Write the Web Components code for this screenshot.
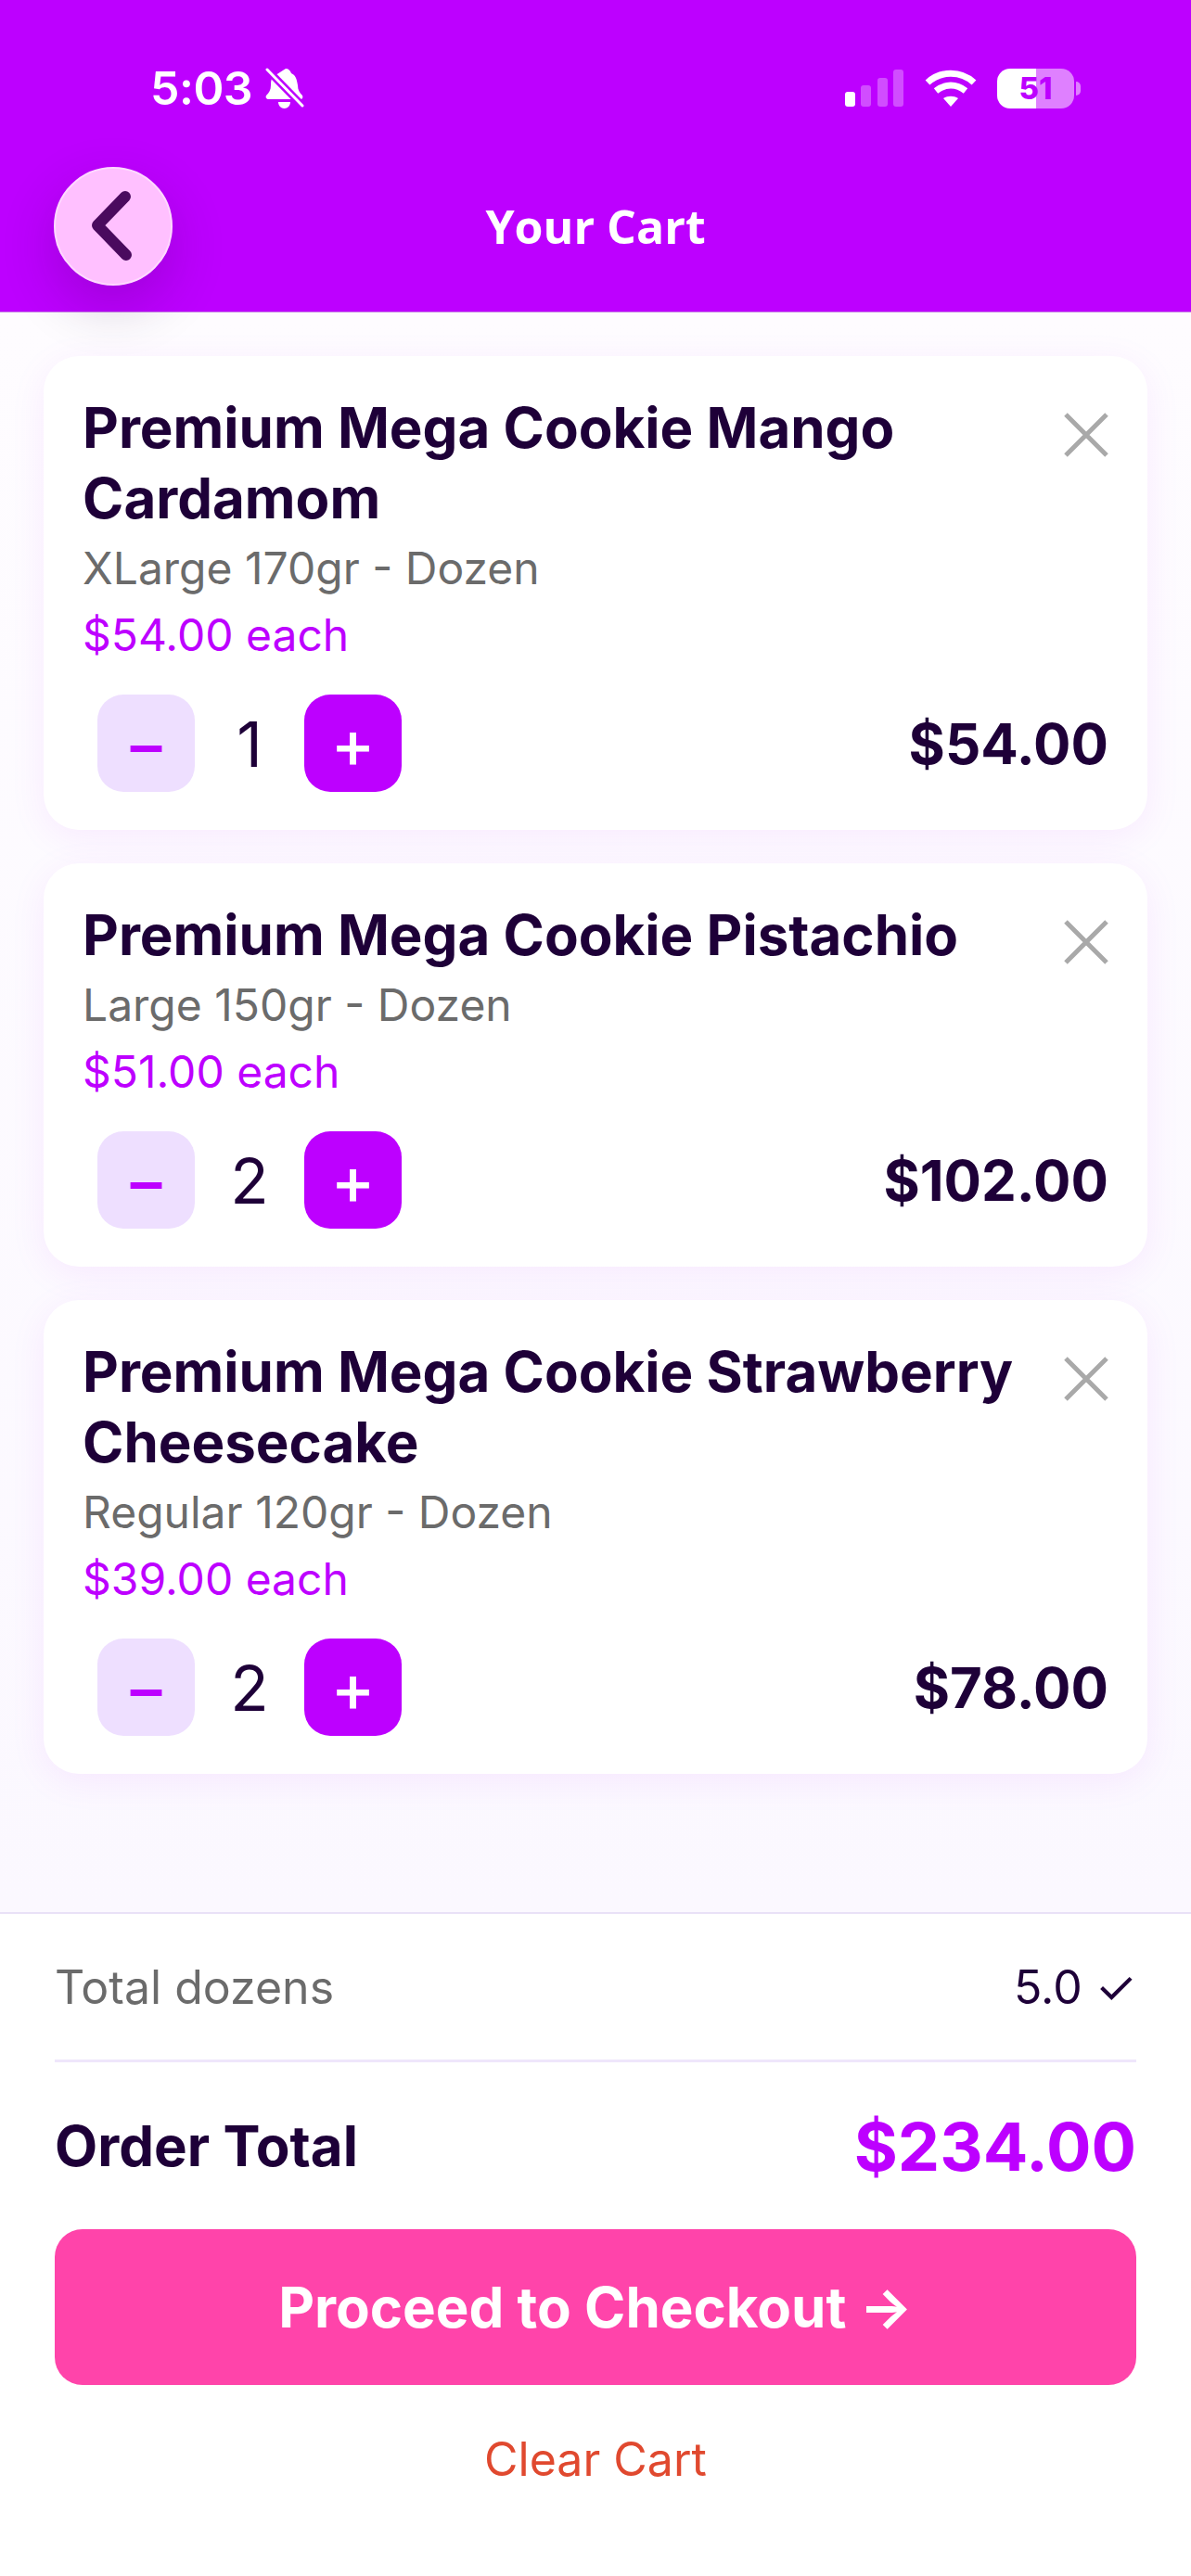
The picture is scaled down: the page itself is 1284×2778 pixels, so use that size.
<!DOCTYPE html>
<html lang="en">
<head>
<meta charset="utf-8">
<title>Your Cart</title>
<style>
    html, body { margin: 0; padding: 0; height: 100%; }
    body { font-family: Inter, "Liberation Sans", sans-serif; color: #1E0038; }
</style>
</head>
<body>
<cart-screen>
    <cart-header slot="header" heading="Your Cart"></cart-header>
    <cart-item name="Premium Mega Cookie Mango Cardamom" variant="XLarge 170gr - Dozen" each="$54.00 each" qty="1" total="$54.00"></cart-item>
    <cart-item name="Premium Mega Cookie Pistachio" variant="Large 150gr - Dozen" each="$51.00 each" qty="2" total="$102.00"></cart-item>
    <cart-item name="Premium Mega Cookie Strawberry Cheesecake" variant="Regular 120gr - Dozen" each="$39.00 each" qty="2" total="$78.00"></cart-item>
    <cart-summary slot="footer"></cart-summary>
</cart-screen>

<script>
class CartScreen extends HTMLElement
{
    constructor()
    {
        super();
        this.attachShadow({mode: 'open'});
    }

    connectedCallback()
    {
        this.shadowRoot.innerHTML =
        `<style>
            :host {
                display: flex;
                flex-direction: column;
                width: 1284px;
                height: 2778px;
                background: #fff;
            }
            main {
                flex: 1;
                display: flex;
                flex-direction: column;
                gap: 36px;
                padding: 47px 47px 0;
                background: linear-gradient(#fefcff, #fbf8ff);
            }
        </style>
        <slot name="header"></slot>
        <main><slot></slot></main>
        <slot name="footer"></slot>`;
    }
}

class StatusBar extends HTMLElement
{
    constructor()
    {
        super();
        this.attachShadow({mode: 'open'});
    }

    connectedCallback()
    {
        this.shadowRoot.innerHTML =
        `<style>
            :host {
                display: flex;
                align-items: center;
                height: 78px;
                padding: 56px 119px 0 162px;
                color: #fff;
            }
            .time {
                font-size: 50px;
                font-weight: 600;
                line-height: 78px;
                letter-spacing: -0.5px;
            }
            .bell { margin-left: 14px; }
            .right {
                margin-left: auto;
                display: flex;
                align-items: center;
            }
            .wifi { margin-left: 22px; }
            .battery {
                position: relative;
                display: flex;
                align-items: center;
                justify-content: center;
                width: 83px;
                height: 43px;
                margin-left: 22px;
                border-radius: 14px;
                background: linear-gradient(90deg, #fff 51%, #df80ff 51%);
                color: #bd00ff;
                font-size: 33px;
                font-weight: 800;
            }
            .nub {
                margin-left: 2px;
                width: 5px;
                height: 15px;
                border-radius: 0 8px 8px 0;
                background: #df80ff;
            }
        </style>
        <span class="time">5:03</span>
        <svg class="bell" width="42" height="45" viewBox="0 0 42 45">
            <path d="M22 1c3 0 5 2 6 5 5 2 6 7 7 13 0 5 2 8 5 11 1 2 0 4-2 4H4c-3 0-4-2-3-4 3-3 5-6 5-11 0-3 0-6 2-9z" fill="#fff"/>
            <path d="M14 37h13c0 4-3 7-6.500 7S14 41 14 37z" fill="#fff"/>
            <path d="M2 2l38 39" stroke="#bd00ff" stroke-width="8"/>
            <path d="M2 2l38 39" stroke="#fff" stroke-width="3" stroke-linecap="round"/>
        </svg>
        <div class="right">
            <svg width="64" height="40" viewBox="0 0 64 40" fill="#fff">
                <rect x="0" y="24" width="11" height="16" rx="3"/>
                <rect x="17" y="17" width="11" height="23" rx="3" opacity=".3"/>
                <rect x="35" y="9" width="11" height="31" rx="3" opacity=".3"/>
                <rect x="52" y="0" width="11" height="40" rx="3" opacity=".3"/>
            </svg>
            <svg class="wifi" width="56" height="41" viewBox="0 0 56 41" fill="none" stroke="#fff" stroke-width="7">
                <path d="M3 14C17 1 39 1 53 14"/>
                <path d="M12 23c10-8 22-8 32 0"/>
                <path d="M28 40l-8-9c5-3 11-3 16 0z" fill="#fff" stroke="none"/>
            </svg>
            <span class="battery">51</span>
            <span class="nub"></span>
        </div>`;
    }
}

class CartHeader extends HTMLElement
{
    constructor()
    {
        super();
        this.attachShadow({mode: 'open'});
    }

    connectedCallback()
    {
        this.shadowRoot.innerHTML =
        `<style>
            :host {
                display: block;
                position: relative;
                z-index: 2;
                height: 337px;
                background: #bd00ff;
                border-bottom: 1px solid #c98ce6;
                box-sizing: border-box;
            }
            .bar {
                display: grid;
                grid-template-columns: 128px 1fr 128px;
                align-items: center;
                margin-top: 46px;
                padding: 0 58px;
            }
            button {
                width: 128px;
                height: 128px;
                padding: 0;
                display: flex;
                align-items: center;
                justify-content: center;
                border: 2px solid #ffd9ff;
                border-radius: 50%;
                background: #ffc0ff;
                box-shadow: 0 22px 60px rgba(40, 0, 60, 0.2);
            }
            h1 {
                margin: 0;
                text-align: center;
                color: #fff;
                font: 700 50px "Open Sans", sans-serif;
            }
        </style>
        <status-bar></status-bar>
        <div class="bar">
            <button aria-label="Back">
                <svg width="48" height="76" viewBox="0 0 48 76" fill="none" stroke="#4a0a5e" stroke-width="12" stroke-linecap="round" stroke-linejoin="round">
                    <path d="M37 6L7 37l31 32"/>
                </svg>
            </button>
            <h1>${this.getAttribute('heading')}</h1>
        </div>`;
    }
}

class QtyStepper extends HTMLElement
{
    constructor()
    {
        super();
        this.attachShadow({mode: 'open'});
    }

    connectedCallback()
    {
        this.shadowRoot.innerHTML =
        `<style>
            :host {
                display: flex;
                align-items: center;
            }
            button {
                width: 105px;
                height: 105px;
                padding: 0;
                border: 0;
                border-radius: 28px;
                font: 500 72px/105px Inter, sans-serif;
            }
            .minus { background: #eedfff; color: #bd00ff; }
            .plus { background: #bd00ff; color: #fff; }
            span {
                width: 118px;
                text-align: center;
                font-size: 68px;
                font-weight: 400;
            }
        </style>
        <button class="minus">−</button>
        <span>${this.getAttribute('value')}</span>
        <button class="plus">+</button>`;
    }
}

class CartItem extends HTMLElement
{
    constructor()
    {
        super();
        this.attachShadow({mode: 'open'});
    }

    connectedCallback()
    {
        const attr = (name) => this.getAttribute(name);

        this.shadowRoot.innerHTML =
        `<style>
            :host {
                display: block;
                padding: 39px 42px 41px;
                border-radius: 38px;
                background: #fff;
                box-shadow: 0 8px 40px rgba(189, 0, 255, 0.07);
            }
            .top {
                display: flex;
                justify-content: space-between;
                align-items: flex-start;
            }
            h2 {
                margin: 0;
                max-width: 1010px;
                font-size: 60px;
                line-height: 76px;
                font-weight: 700;
            }
            svg { flex: none; margin-top: 22px; }
            .variant, .each {
                font-size: 48px;
                line-height: 72px;
            }
            .variant { color: #6b6b6b; margin-top: 2px; }
            .each { color: #bd00ff; }
            .row {
                display: flex;
                align-items: center;
                justify-content: space-between;
                margin-top: 28px;
                padding-left: 16px;
            }
            .total {
                font-size: 60px;
                font-weight: 700;
            }
        </style>
        <div class="top">
            <h2>${attr('name')}</h2>
            <svg width="48" height="48" viewBox="0 0 48 48" stroke="#a9a9a9" stroke-width="5">
                <path d="M2 2l44 44M46 2L2 46"/>
            </svg>
        </div>
        <div class="variant">${attr('variant')}</div>
        <div class="each">${attr('each')}</div>
        <div class="row">
            <qty-stepper value="${attr('qty')}"></qty-stepper>
            <span class="total">${attr('total')}</span>
        </div>`;
    }
}

class CartSummary extends HTMLElement
{
    constructor()
    {
        super();
        this.attachShadow({mode: 'open'});
    }

    connectedCallback()
    {
        this.shadowRoot.innerHTML =
        `<style>
            :host {
                display: block;
                height: 716px;
                box-sizing: border-box;
                padding: 0 59px;
                border-top: 2px solid #e9e1f7;
                background: #fff;
            }
            .line {
                display: flex;
                align-items: center;
                justify-content: space-between;
            }
            .dozens {
                height: 160px;
                box-sizing: border-box;
                border-bottom: 3px solid #efe6fb;
                font-size: 50px;
                color: #6b6b6b;
            }
            .dozens b {
                font-weight: 400;
                color: #1e0038;
            }
            .order {
                height: 180px;
                font-size: 60px;
                font-weight: 700;
            }
            .amount {
                font-size: 72px;
                color: #bd00ff;
            }
            button {
                display: block;
                width: 100%;
                height: 168px;
                border: 0;
                border-radius: 30px;
                background: #ff44aa;
                color: #fff;
                font: 700 60px Inter, sans-serif;
            }
            .clear {
                margin-top: 50px;
                text-align: center;
                font-size: 50px;
                color: #e0492f;
            }
        </style>
        <div class="line dozens"><span>Total dozens</span><b>5.0 ✓</b></div>
        <div class="line order"><span>Order Total</span><span class="amount">$234.00</span></div>
        <button>Proceed to Checkout →</button>
        <div class="clear">Clear Cart</div>`;
    }
}

window.customElements.define('status-bar', StatusBar);
window.customElements.define('cart-header', CartHeader);
window.customElements.define('qty-stepper', QtyStepper);
window.customElements.define('cart-item', CartItem);
window.customElements.define('cart-summary', CartSummary);
window.customElements.define('cart-screen', CartScreen);
</script>
</body>
</html>
